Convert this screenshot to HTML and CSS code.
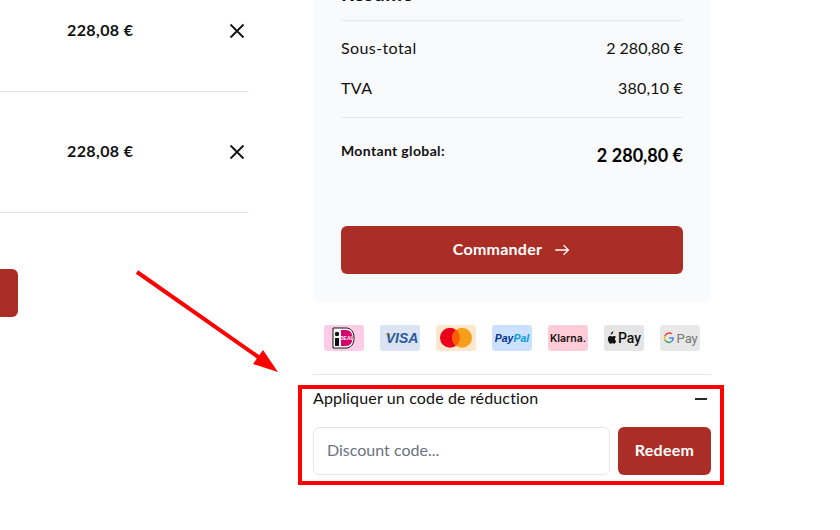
FILE: index.html
```html
<!DOCTYPE html>
<html lang="fr">
<head>
    <meta charset="UTF-8">
    <meta name="viewport" content="width=device-width, initial-scale=1.0">
    <title>Panier</title>
    <link rel="stylesheet" href="styles.css">
</head>
<body>
    <div class="page">
        <div class="cart">
            <div class="cart-row">
                <span class="price">228,08 €</span>
                <svg class="remove" viewBox="0 0 24 24"><path d="M5.500 5.500l13 13M18.500 5.500l-13 13"/></svg>
            </div>
            <div class="cart-row">
                <span class="price">228,08 €</span>
                <svg class="remove" viewBox="0 0 24 24"><path d="M5.500 5.500l13 13M18.500 5.500l-13 13"/></svg>
            </div>
            <div class="cart-btn"></div>
        </div>

        <div class="side">
            <div class="summary">
                <h2>Résumé</h2>
                <div class="lines">
                    <div class="line"><span class="line-name">Sous-total</span><span class="line-value">2&#8239;280,80 €</span></div>
                    <div class="line"><span class="line-name">TVA</span><span class="line-value">380,10 €</span></div>
                </div>
                <div class="total">
                    <span class="total-label">Montant global:</span>
                    <span class="total-value">2&#8239;280,80 €</span>
                </div>
                <button class="btn order-btn"><span class="btn-text">Commander</span>
                    <svg class="arrow" viewBox="0 0 24 24"><path d="M3 12h17M14 5.500l6.500 6.500-6.500 6.500"/></svg>
                </button>
            </div>

            <div class="payments">
                <svg class="pay pay-ideal" viewBox="0 0 40 26">
                    <path d="M9 3h13c5 0 8 4 8 10s-3 10-8 10H9z" fill="#fff" stroke="#111" stroke-width="1"/>
                    <rect x="11" y="13" width="4" height="8" fill="#111"/>
                    <circle cx="13" cy="9" r="2.200" fill="#111"/>
                    <path d="M17 5h5c4 0 6.500 3.500 6.500 8s-2.500 8-6.500 8h-5z" fill="#d5006c"/>
                    <text class="ideal-text" x="22.800" y="14.500" text-anchor="middle">DEAL</text>
                </svg>
                <svg class="pay pay-visa" viewBox="0 0 40 26">
                    <path d="M3 9c3 0 6 1.500 8 5l-1.500-5z" fill="#f0a436"/>
                    <text class="visa-text" x="22" y="18" text-anchor="middle">VISA</text>
                </svg>
                <svg class="pay pay-mc" viewBox="0 0 40 26">
                    <circle cx="14" cy="12.700" r="10" fill="#eb001b"/>
                    <circle cx="26" cy="12.700" r="10" fill="#f79e1b"/>
                    <path d="M20 4.700a10 10 0 0 1 0 16a10 10 0 0 1 0-16z" fill="#ff5f00"/>
                </svg>
                <svg class="pay pay-paypal" viewBox="0 0 40 26">
                    <text class="paypal-text" x="20" y="16.500" text-anchor="middle">Pay<tspan class="paypal-light">Pal</tspan></text>
                </svg>
                <svg class="pay pay-klarna" viewBox="0 0 40 26">
                    <text class="klarna-text" x="20" y="17" text-anchor="middle">Klarna.</text>
                </svg>
                <svg class="pay pay-apple" viewBox="0 0 40 26">
                    <path d="M8.600 8.400c.5-.6.800-1.300.7-2-.7 0-1.500.5-1.900 1-.4.500-.8 1.300-.7 2 .8 0 1.500-.4 1.900-1zM10.900 13.900c0-1.300 1-1.900 1.100-2-.6-.9-1.500-1-1.900-1-.8-.1-1.600.5-2 .5-.4 0-1-.5-1.700-.5-.9 0-1.700.5-2.100 1.300-.9 1.600-.2 3.900.7 5.200.4.600.9 1.300 1.600 1.300.7 0 .9-.4 1.700-.4s1 .4 1.700.4c.7 0 1.100-.6 1.500-1.300.5-.7.700-1.400.7-1.400s-1.300-.6-1.300-2.100z" fill="#111"/>
                    <text class="wallet-text apple-text" x="14" y="18">Pay</text>
                </svg>
                <svg class="pay pay-google" viewBox="0 0 40 26">
                    <path d="M4.900 11a4.500 4.500 0 0 1 7-2" fill="none" stroke="#ea4335" stroke-width="1.500"/>
                    <path d="M4.900 11a4.500 4.500 0 0 0 0 4" fill="none" stroke="#fbbc05" stroke-width="1.500"/>
                    <path d="M4.900 15a4.500 4.500 0 0 0 6.700 1.500" fill="none" stroke="#34a853" stroke-width="1.500"/>
                    <path d="M11.600 16.500a4.500 4.500 0 0 0 1.600-3.500H9" fill="none" stroke="#4285f4" stroke-width="1.500"/>
                    <text class="wallet-text google-text" x="16.500" y="18">Pay</text>
                </svg>
            </div>

            <div class="discount">
                <div class="discount-head">
                    <span class="discount-title">Appliquer un code de réduction</span>
                    <svg class="minus" viewBox="0 0 16 16"><path d="M2 8h12"/></svg>
                </div>
                <div class="discount-form">
                    <input class="discount-input" type="text" placeholder="Discount code...">
                    <button class="btn redeem-btn"><span class="btn-text">Redeem</span></button>
                </div>
            </div>
        </div>

        <!-- annotation drawn over the screenshot -->
        <svg class="notes" viewBox="0 0 840 530">
            <rect x="300" y="387" width="422" height="96"/>
            <path class="notes-line" d="M137 272L264 361"/>
            <path class="notes-head" d="M278 372L253 364L263 350z"/>
        </svg>
    </div>
</body>
</html>
```

FILE: styles.css
```css
* {
    box-sizing: border-box;
}
body {
    margin: 0;
    background-color: #fff;
    color: #111;
    font-family: "Lato", "Noto Sans", sans-serif;
    font-size: 16px;
    line-height: 24px;
}
.page {
    position: relative;
    display: flex;
    gap: 64px;
    width: 840px;
    height: 530px;
    overflow: hidden;
}
.cart {
    width: 249px;
    margin-top: -29px;
}
.cart-row {
    display: flex;
    justify-content: space-between;
    height: 121px;
    padding: 47px 0 0 67px;
    border-bottom: 1px solid #e5e7eb;
}
.price {
    font-size: 16px;
    font-weight: 700;
    letter-spacing: .4px;
}
.remove {
    width: 24px;
    height: 24px;
    margin-top: 1px;
    fill: none;
    stroke: #111;
    stroke-width: 1.8;
}
.cart-btn {
    width: 18px;
    height: 48px;
    margin-top: 56px;
    background-color: #ab2e26;
    border-radius: 0 6px 6px 0;
}
.side {
    width: 398px;
}
.summary {
    margin-top: -40px;
    padding: 19px 28px 28px;
    background-color: #f9fafb;
    border-radius: 0 0 8px 8px;
}
.summary h2 {
    margin: 0;
    padding-bottom: 13px;
    font-size: 20px;
    line-height: 28px;
    font-weight: 700;
    letter-spacing: .3px;
    border-bottom: 1px solid #e5e7eb;
}
.lines {
    display: flex;
    flex-direction: column;
    gap: 16px;
    padding: 15px 0 17px;
    border-bottom: 1px solid #e5e7eb;
}
.line {
    display: flex;
    justify-content: space-between;
}
.line-name {
    letter-spacing: .4px;
}
.line-value {
    letter-spacing: .2px;
}
.total {
    display: flex;
    justify-content: space-between;
    margin-top: 23px;
}
.total-label {
    font-size: 14px;
    line-height: 20px;
    font-weight: 700;
    letter-spacing: .35px;
}
.total-value {
    font-size: 18px;
    line-height: 28px;
    font-weight: 700;
    letter-spacing: .4px;
    color: #000;
}
.btn {
    display: flex;
    align-items: center;
    justify-content: center;
    height: 48px;
    background-color: #ab2e26;
    color: #fff;
    border: none;
    border-radius: 6px;
    font-family: inherit;
    font-size: 16px;
    font-weight: 700;
}
.btn-text {
    margin-bottom: 3px;
    letter-spacing: .25px;
}
.order-btn {
    gap: 11px;
    width: 100%;
    margin-top: 57px;
}
.arrow {
    width: 18px;
    height: 18px;
    fill: none;
    stroke: #fff;
    stroke-width: 1.8;
}
.payments {
    display: flex;
    justify-content: space-between;
    margin-top: 23px;
    padding: 0 11px 23px;
    border-bottom: 1px solid #e5e7eb;
}
.pay {
    display: block;
    width: 40px;
    height: 26px;
    border-radius: 3px;
}
.pay-ideal { background-color: #ffcce8; }
.pay-visa { background-color: #dbe4f3; }
.pay-mc { background-color: #fde8cf; }
.pay-paypal { background-color: #cce0ff; }
.pay-klarna { background-color: #ffccd8; }
.pay-apple { background-color: #e5e5e5; }
.pay-google { background-color: #e8e8e8; }
.ideal-text {
    font: 700 5px "Liberation Sans", sans-serif;
    fill: #fff;
}
.visa-text {
    font: italic 700 14px "Liberation Sans", sans-serif;
    fill: #2a5a9e;
}
.paypal-text {
    font: italic 700 10.5px "Liberation Sans", sans-serif;
    fill: #003087;
}
.paypal-light {
    fill: #009cde;
}
.klarna-text {
    font: 600 10.5px "Inter", sans-serif;
    fill: #17120f;
}
.wallet-text {
    font: 500 14px "Roboto", sans-serif;
}
.apple-text {
    fill: #111;
}
.google-text {
    font-size: 13px;
    font-weight: 400;
    fill: #777;
}
.discount-head {
    display: flex;
    align-items: center;
    justify-content: space-between;
    margin-top: 11px;
    padding-right: 2px;
}
.discount-title {
    letter-spacing: .15px;
}
.minus {
    width: 16px;
    height: 16px;
    margin-top: 2px;
    fill: none;
    stroke: #111;
    stroke-width: 1.8;
}
.discount-form {
    display: flex;
    gap: 8px;
    margin-top: 17px;
}
.discount-input {
    flex: 1;
    min-width: 0;
    height: 48px;
    padding: 0 13px 3px;
    border: 1px solid #e5e7eb;
    border-radius: 6px;
    font-family: inherit;
    font-size: 16px;
}
.discount-input::placeholder {
    color: #6b7280;
}
.redeem-btn {
    width: 93px;
}
.notes {
    position: absolute;
    top: 0;
    left: 0;
    width: 840px;
    height: 530px;
    pointer-events: none;
}
.notes rect {
    fill: none;
    stroke: #f00;
    stroke-width: 4;
}
.notes-line {
    stroke: #f00;
    stroke-width: 4;
}
.notes-head {
    fill: #f00;
}
```
